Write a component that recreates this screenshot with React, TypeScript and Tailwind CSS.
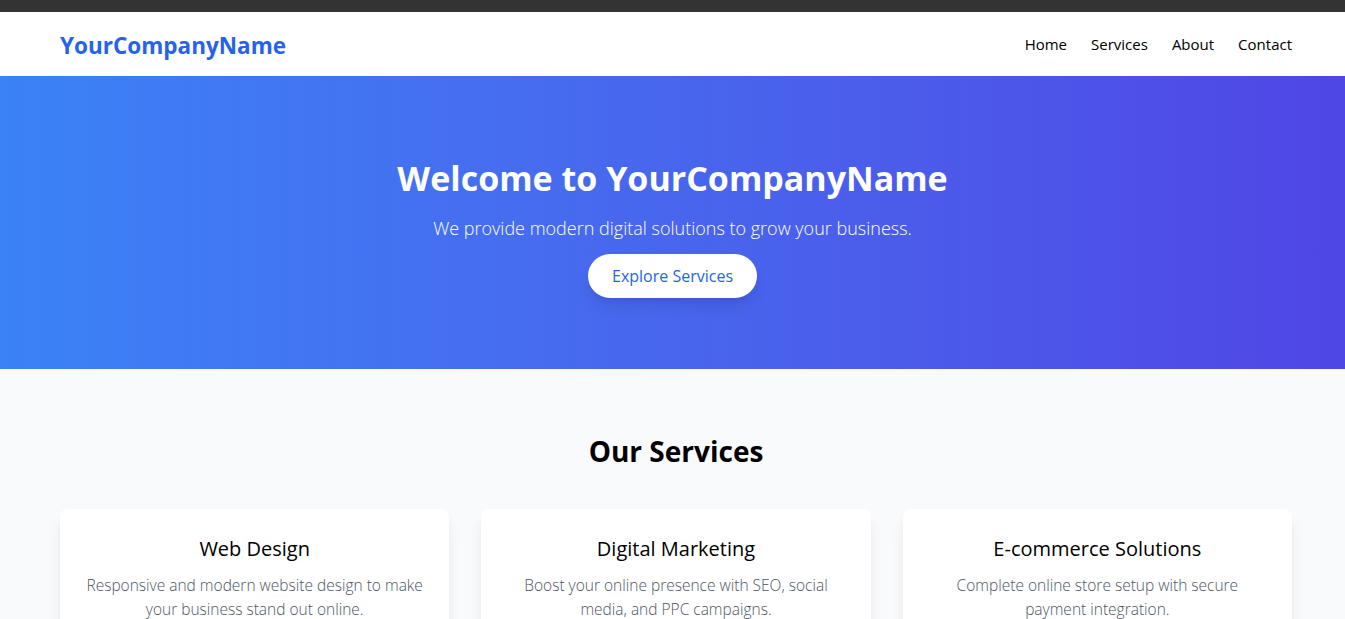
const services = [
  {
    title: "Web Design",
    text: "Responsive and modern website design to make your business stand out online.",
  },
  {
    title: "Digital Marketing",
    text: "Boost your online presence with SEO, social media, and PPC campaigns.",
  },
  {
    title: "E-commerce Solutions",
    text: "Complete online store setup with secure payment integration.",
  },
];

function Header() {
  return (
    <header className="bg-white h-16 flex items-center justify-between pl-[60px] pr-[53px]">
      <a href="#" className="text-[22.5px] leading-8 font-bold text-[#2563eb] pt-1">
        YourCompanyName
      </a>
      <nav className="flex gap-6 text-[15px] text-black">
        <a href="#">Home</a>
        <a href="#">Services</a>
        <a href="#">About</a>
        <a href="#">Contact</a>
      </nav>
    </header>
  );
}

function Hero() {
  return (
    <section className="bg-gradient-to-r from-[#3b82f6] to-[#4f46e5] text-white text-center pt-[82px] pb-[71px]">
      <h1 className="text-[34px] leading-10 font-bold mb-4">Welcome to YourCompanyName</h1>
      <p className="text-lg font-light mb-3">
        We provide modern digital solutions to grow your business.
      </p>
      <button className="bg-white text-[#2563eb] font-medium px-6 py-2.5 rounded-full shadow-lg">
        Explore Services
      </button>
    </section>
  );
}

function ServiceCard({ title, text }: { title: string; text: string }) {
  return (
    <div className="bg-white rounded-lg shadow-lg p-6 pt-[26px] text-center">
      <h3 className="text-xl leading-7 mb-[10px] text-black">{title}</h3>
      <p className="text-[#4b5563] text-[15.5px] leading-6 font-light">{text}</p>
    </div>
  );
}

export default function App() {
  return (
    <div className="min-h-screen font-['Open_Sans',sans-serif]">
      <div className="h-3 bg-[#333333]" />
      <Header />
      <Hero />
      <section className="bg-[#f9fafb] py-16 pl-[60px] pr-[53px]">
        <h2 className="text-[28px] leading-9 font-bold text-center mb-10">Our Services</h2>
        <div className="grid grid-cols-3 gap-8">
          {services.map((s) => (
            <ServiceCard key={s.title} title={s.title} text={s.text} />
          ))}
        </div>
      </section>
    </div>
  );
}
